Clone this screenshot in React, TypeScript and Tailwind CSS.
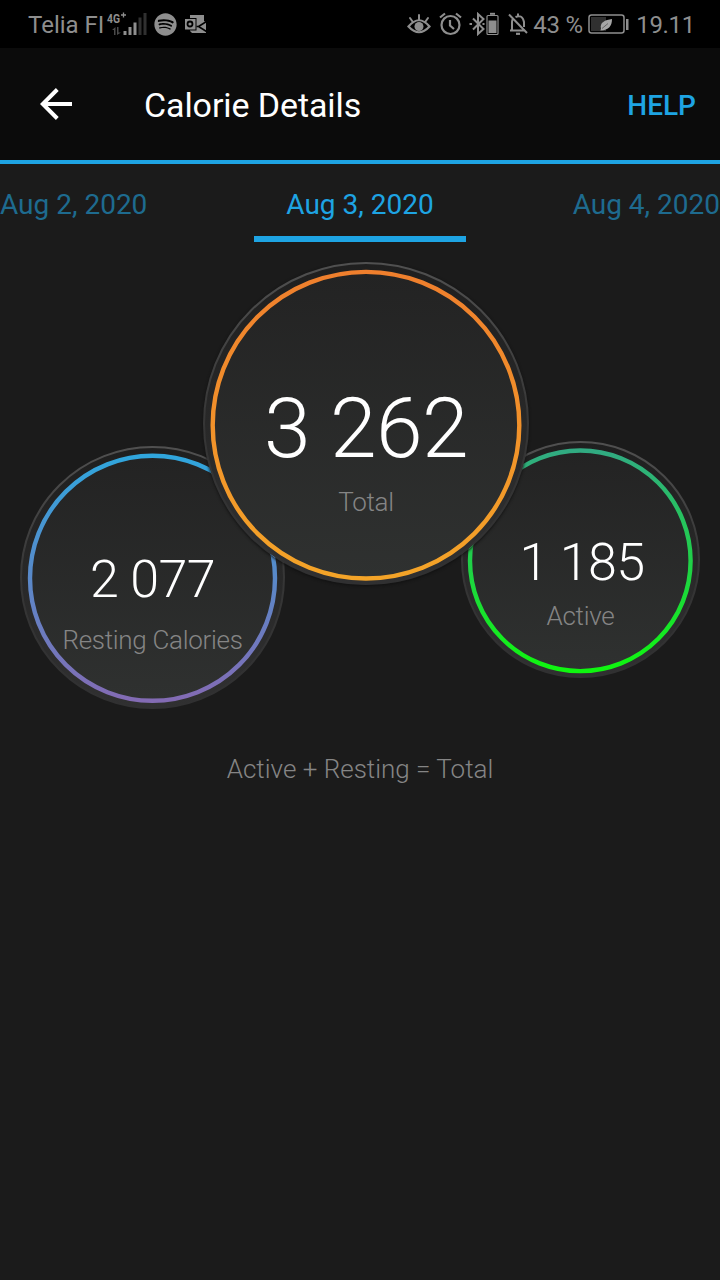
import { FaSpotify } from "react-icons/fa";

type BubbleProps = {
  id: string;
  width: number;
  height: number;
  cx: number;
  cy: number;
  r: number;
  from: string;
  to: string;
  className: string;
  value: string;
  valueClass: string;
  label: string;
  labelClass: string;
};

function Bubble({ id, width, height, cx, cy, r, from, to, className, value, valueClass, label, labelClass }: BubbleProps) {
  return (
    <div className={`relative shrink-0 rounded-full ${className}`}>
      <svg className="absolute inset-0" width={width} height={height} viewBox={`0 0 ${width} ${height}`}>
        <defs>
          <linearGradient id={`${id}-ring`} x1="0" y1="0" x2="0" y2="1">
            <stop offset="0" stopColor={from} />
            <stop offset="1" stopColor={to} />
          </linearGradient>
          <linearGradient id={`${id}-fill`} x1="0" y1="0" x2="0" y2="1">
            <stop offset="0" stopColor="#232323" />
            <stop offset="1" stopColor="#2f3130" />
          </linearGradient>
          <linearGradient id={`${id}-rim`} x1="0" y1="0" x2="0" y2="1">
            <stop offset="0" stopColor="#505050" />
            <stop offset="0.5" stopColor="#363636" />
            <stop offset="1" stopColor="#303031" />
          </linearGradient>
          <linearGradient id={`${id}-band`} x1="0" y1="0" x2="0" y2="1">
            <stop offset="0" stopColor="#1f1f1f" />
            <stop offset="0.5" stopColor="#282828" />
            <stop offset="1" stopColor="#303031" />
          </linearGradient>
        </defs>
        <ellipse
          cx={width / 2}
          cy={height / 2}
          rx={width / 2 - 1}
          ry={height / 2 - 1}
          fill={`url(#${id}-band)`}
          stroke={`url(#${id}-rim)`}
          strokeWidth="2"
        />
        <circle cx={cx} cy={cy} r={r} fill={`url(#${id}-fill)`} stroke={`url(#${id}-ring)`} strokeWidth="4.4" />
      </svg>
      <div className="relative flex flex-col items-center whitespace-nowrap">
        <span className={`font-light text-white ${valueClass}`}>{value}</span>
        <span className={`text-[26px] font-light leading-[28px] tracking-[-0.3px] text-[#858585] ${labelClass}`}>{label}</span>
      </div>
    </div>
  );
}

function StatusBar() {
  return (
    <div className="flex h-12 items-center justify-between bg-black pl-7 pr-[25px] text-[24px] leading-none text-[#8e8e8e]">
      <div className="flex items-center">
        <span className="w-[77px] whitespace-nowrap pt-[2px]">Telia FI</span>
        <svg width="42" height="28" viewBox="0 0 42 28" fill="currentColor">
          <text x="2" y="13" fontSize="13.500" fontWeight="700" textLength="13" lengthAdjust="spacingAndGlyphs">4G</text>
          <path d="M16 5h5M18.500 2.500v5" stroke="currentColor" strokeWidth="1.300" />
          <path d="M10.500 17v8H9v-5H7zM12 17h1.500v5.500H16L12 25z" fill="#4b4b4b" />
          <rect x="18.500" y="21" width="3" height="4" />
          <rect x="23.500" y="17" width="3" height="8" />
          <rect x="28.500" y="12.500" width="3" height="12.500" />
          <rect x="33.500" y="7.500" width="3" height="17.500" fill="#303030" />
          <rect x="38.500" y="3" width="3" height="22" fill="#303030" />
        </svg>
        <FaSpotify className="ml-[7px] size-[23px]" />
        <svg className="ml-[7px]" width="23" height="20" viewBox="0 0 23 20">
          <path d="M6 1h14v6l2 1v11H8l-2-2z" fill="#8e8e8e" />
          <path d="M22.500 7.500l-8 5 8 5M12.500 12.500h2" stroke="#000" strokeWidth="1.600" fill="none" />
          <rect x="0.500" y="4.500" width="11.500" height="11.500" fill="#8e8e8e" stroke="#000" />
          <circle cx="6" cy="10" r="2.500" fill="none" stroke="#000" strokeWidth="1.800" />
        </svg>
      </div>
      <div className="flex items-center">
        <svg width="24" height="24" viewBox="0 0 24 24" fill="none" stroke="currentColor" strokeWidth="2" strokeLinecap="round">
          <path d="M1.500 14.500Q12 2 22.500 14.500Q12 26 1.500 14.500z" strokeWidth="2.200" />
          <circle cx="12" cy="14.500" r="4.500" fill="currentColor" stroke="none" />
          <path d="M12 3v5M3 6l2.500 3.500M21 6l-2.500 3.500" />
        </svg>
        <svg className="ml-[8px]" width="23" height="24" viewBox="0 0 23 24" fill="none" stroke="currentColor" strokeWidth="2.200">
          <circle cx="11.500" cy="13" r="9" />
          <path d="M11 8v5.500l4 3.500M1 5.500l5-4M22 5.500l-5-4" />
        </svg>
        <svg className="ml-[6px]" width="32" height="24" viewBox="0 0 32 24" fill="none" stroke="currentColor" strokeWidth="2">
          <path d="M5 6.500l10.500 10.500-5.500 5V2l5.500 5L5 17.500" />
          <path d="M1.500 12h2.500M14.500 12h2" strokeWidth="2" />
          <rect x="19" y="3.500" width="11" height="19" rx="1" strokeWidth="1.200" />
          <path d="M22 1.800h5" strokeWidth="2" />
          <rect x="20.500" y="8.500" width="8" height="12.500" fill="currentColor" stroke="none" />
        </svg>
        <svg className="ml-[7px]" width="22" height="24" viewBox="0 0 22 24" fill="none" stroke="currentColor" strokeWidth="2">
          <path d="M2 2.500l18 18.500M3 18.500h14M5 18v-8q0-2 1-3.500M8.500 5q7-3 8.500 5v5M11 1.500v3" />
          <path d="M9 21.800h4" strokeWidth="2.200" />
        </svg>
        <span className="ml-[4px] w-[55px] whitespace-nowrap pt-[2px] tracking-[-0.2px]">43 %</span>
        <svg width="42" height="22" viewBox="0 0 42 22">
          <rect x="1" y="2" width="35" height="18" rx="2.500" fill="none" stroke="#8e8e8e" strokeWidth="1.500" />
          <rect x="3" y="4" width="15" height="14" fill="#303030" />
          <path d="M24 6C17 7 11.500 9.500 13 15.500L12.500 17.500C21 17 24 13 24 6z" fill="#a5a5a5" />
          <path d="M14 15.500L20 10.500" stroke="#555" strokeWidth="0.800" />
          <rect x="38" y="6" width="2.500" height="11" fill="#8e8e8e" />
        </svg>
        <span className="ml-[6px] pt-[2px] tracking-[-0.3px]">19.11</span>
      </div>
    </div>
  );
}

export default function App() {
  return (
    <div className="flex h-[1280px] w-[720px] flex-col overflow-hidden bg-[#1b1b1b] font-['Roboto',sans-serif]">
      <StatusBar />

      <header className="flex h-[116px] items-center border-b-4 border-[#1ea4e3] bg-[#0b0b0b] pl-10 pr-6">
        <svg width="32" height="32" viewBox="0 0 32 32" fill="none" stroke="white" strokeWidth="4">
          <path d="M32 16H3M17.300 1.500L2.800 16l14.500 14.500" />
        </svg>
        <h1 className="ml-[72px] pt-[2px] text-[34px] leading-none tracking-[-0.1px] text-white">Calorie Details</h1>
        <button className="ml-auto pt-[3px] text-[28px] font-medium leading-none text-[#1ea4e3]">HELP</button>
      </header>

      <nav className="flex h-[78px] justify-between text-[28px] leading-none text-[#1ea4e3]">
        <span className="pt-[27px] text-[#1e6b8f]">Aug 2, 2020</span>
        <span className="w-[212px] border-b-6 border-[#1ea4e3] pt-[27px] text-center">Aug 3, 2020</span>
        <span className="pt-[27px] text-[#1e6b8f]">Aug 4, 2020</span>
      </nav>

      <main className="flex flex-col">
        <div className="flex h-[467px] items-start pl-5 pt-5">
          <Bubble
            id="resting"
            width={265}
            height={263}
            cx={132.5}
            cy={132.3}
            r={122.5}
            from="#30a6dd"
            to="#836bb4"
            className="mt-[184px] h-[263px] w-[265px] pt-[108px]"
            value="2 077"
            valueClass="text-[52px] leading-[52px] tracking-[-0.6px]"
            label="Resting Calories"
            labelClass="mt-[20px]"
          />
          <Bubble
            id="total"
            width={326}
            height={323}
            cx={163}
            cy={163.2}
            r={153.3}
            from="#ef7f2d"
            to="#f4a428"
            className="z-10 -ml-[82px] h-[323px] w-[326px] pt-[125px] shadow-[0_1px_3px_#111111]"
            value="3 262"
            valueClass="text-[84px] leading-[84px] tracking-[-0.6px]"
            label="Total"
            labelClass="mt-[17px]"
          />
          <Bubble
            id="active"
            width={239}
            height={237}
            cx={119.3}
            cy={119.8}
            r={110.3}
            from="#31ab82"
            to="#0ff60f"
            className="-ml-[68px] mt-[179px] h-[237px] w-[239px] pt-[96px]"
            value="1 185"
            valueClass="text-[52px] leading-[52px] tracking-[-0.6px] pl-[3px]"
            label="Active"
            labelClass="mt-[13px]"
          />
        </div>
        <p className="mt-[46px] text-center text-[26px] font-light leading-[28px] text-[#858585]">Active + Resting = Total</p>
      </main>
    </div>
  );
}
